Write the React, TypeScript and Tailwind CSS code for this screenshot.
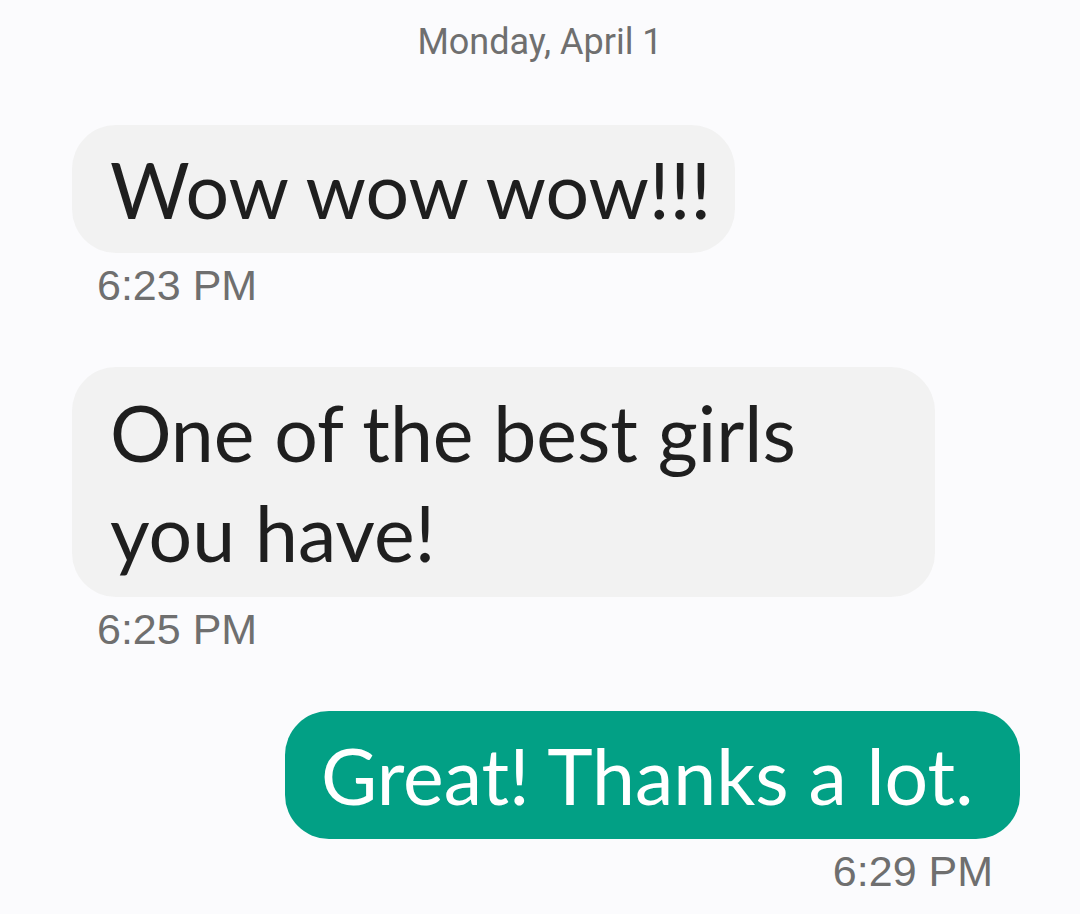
import React from 'react';

type Msg = {
  id: number;
  text: string[];
  time: string;
  mine?: boolean;
  width: string;
  height: string;
};

const messages: Msg[] = [
  { id: 1, text: ['Wow wow wow!!!'], time: '6:23 PM', width: 'w-[663px]', height: 'h-[128px]' },
  { id: 2, text: ['One of the best girls', 'you have!'], time: '6:25 PM', width: 'w-[863px]', height: 'h-[230px]' },
  { id: 3, text: ['Great! Thanks a lot.'], time: '6:29 PM', mine: true, width: 'w-[735px]', height: 'h-[128px]' },
];

const Bubble = ({ msg }: { msg: Msg }) => (
  <div className={`flex flex-col ${msg.mine ? 'items-end' : 'items-start'}`}>
    <div
      className={`${msg.width} ${msg.height} flex flex-col justify-center rounded-[44px] whitespace-nowrap ${
        msg.mine ? 'bg-[#02a085] text-white pl-[36px]' : 'bg-[#f2f2f2] text-[#1f1f1f] pl-[38px]'
      } font-['Lato',sans-serif] text-[77px] leading-[100px]`}
    >
      {msg.text.map((line) => (
        <div key={line}>{line}</div>
      ))}
    </div>
    <div
      className={`mt-[12px] ${msg.mine ? 'pr-[27px]' : 'pl-[25px]'} font-['Liberation_Sans',sans-serif] text-[43px] leading-[40px] text-[#6f6f6f]`}
    >
      {msg.time}
    </div>
  </div>
);

export default function App() {
  return (
    <div className="w-[1080px] h-[914px] bg-[#fbfbfd] pl-[72px] pr-[60px] pt-[22px] overflow-hidden">
      <div className="text-center pr-[12px] font-['Roboto',sans-serif] text-[36px] leading-[40px] text-[#6f6f6f]">
        Monday, April 1
      </div>
      <div className="mt-[63px] flex flex-col gap-[62px]">
        {messages.map((m) => (
          <Bubble key={m.id} msg={m} />
        ))}
      </div>
    </div>
  );
}
